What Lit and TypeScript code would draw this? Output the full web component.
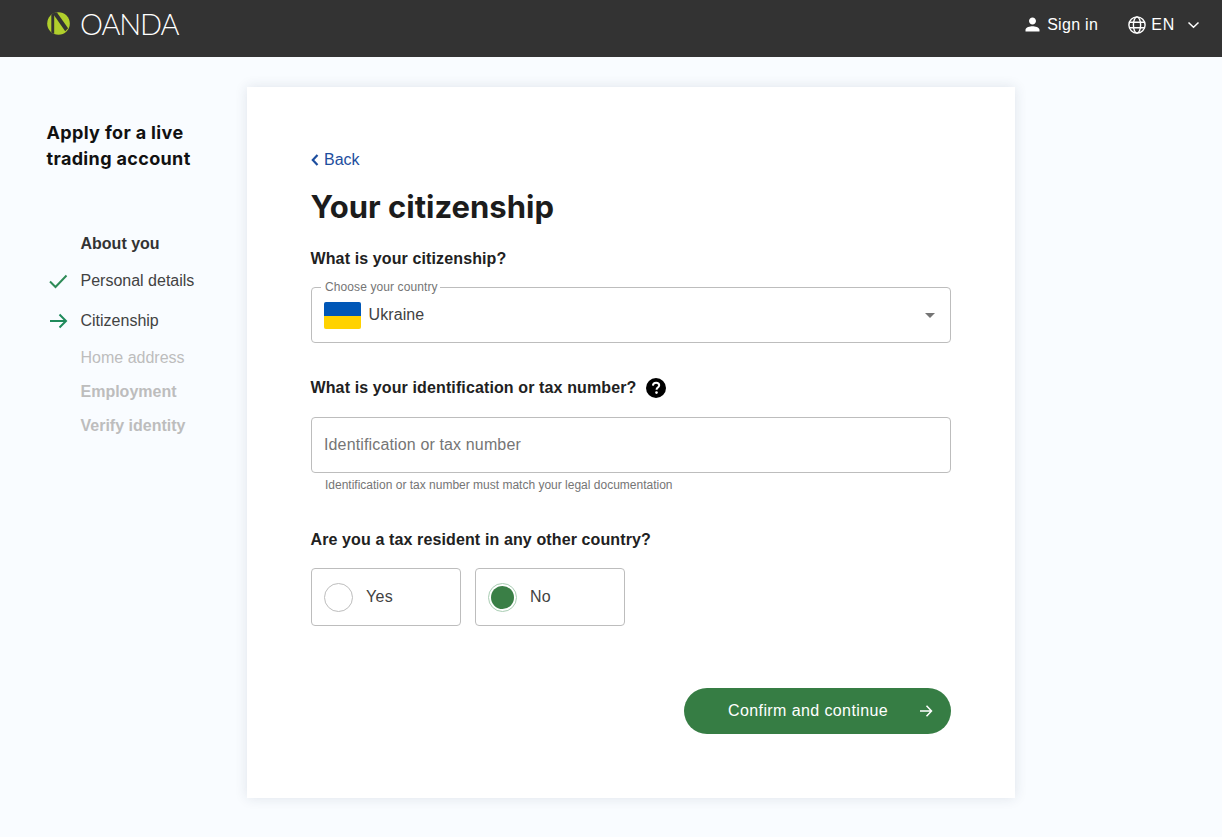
import { LitElement, html, css } from "lit";
import { customElement } from "lit/decorators.js";

@customElement("app-root")
export class AppRoot extends LitElement {
  static styles = css`
    :host { display: block; min-height: 837px; background: #f9fcff; font-family: "Liberation Sans", Arial, sans-serif; color: #212121; }
    * { box-sizing: border-box; }
    .top { height: 57px; background: #333333; display: flex; align-items: flex-start; padding: 0 22px 0 47px; color: #fff; }
    .logo { display: flex; align-items: center; height: 47px; gap: 10px; }
    .word { font-family: Lato, sans-serif; font-weight: 300; font-size: 29px; letter-spacing: -1.1px; line-height: 47px; color: #fff; }
    .spacer { flex: 1; }
    .nav { display: flex; align-items: center; height: 49px; font-size: 16px; color: #fff; }
    .nav svg { display: block; }
    .signin { margin-left: 4px; margin-right: 30px; letter-spacing: .3px; }
    .en { margin-left: 5px; margin-right: 12px; letter-spacing: .8px; }
    .main { display: flex; align-items: flex-start; padding: 30px 0 0 46px; }
    .side { width: 201px; flex: none; padding-top: 33px; }
    .title { font-family: Inter, sans-serif; font-weight: 700; font-size: 18px; line-height: 26px; color: #111; margin: 0 0 0 .5px; letter-spacing: .35px; }
    .steps { margin-top: 63px; font-size: 16px; color: #424242; }
    .step { display: flex; align-items: center; padding-left: 34.5px; position: relative; line-height: 18px; }
    .step svg { position: absolute; left: 3px; top: 50%; transform: translateY(-50%); }
    .b { font-weight: 700; color: #333; }
    .step.dim { color: #bdbdbd; }
    .s1 { height: 18px; }
    .s2 { margin-top: 19px; height: 18px; }
    .s3 { margin-top: 22px; height: 18px; }
    .s4 { margin-top: 19px; height: 18px; }
    .s5, .s6 { margin-top: 16px; height: 18px; }
    .card { width: 768px; height: 711px; flex: none; background: #fff; box-shadow: 0 0 12px rgba(30,50,80,.12); padding: 64px 64px 0 64px; }
    .back { display: flex; align-items: center; gap: 5px; color: #1d4e9e; font-size: 16px; line-height: 18px; height: 18px; }
    h1 { font-family: Inter, sans-serif; font-weight: 700; font-size: 31px; line-height: 40px; margin: 18px 0 0 -.5px; color: #1c1c1c; }
    .q { font-size: 16px; font-weight: 700; line-height: 18px; letter-spacing: .12px; color: #212121; display: flex; align-items: center; margin-left: -.5px; }
    .q1 { margin-top: 23px; }
    .field { width: 640px; height: 56px; border: 1px solid #bdbdbd; border-radius: 4px; background: #fff; position: relative; display: flex; align-items: center; padding-left: 12px; }
    .sel { margin-top: 19px; }
    .legend { position: absolute; left: 9px; top: -8px; background: #fff; padding: 0 2px 0 4px; font-size: 12px; line-height: 15px; color: #757575; letter-spacing: .1px; }
    .flag { width: 37px; height: 27px; border-radius: 2px; overflow: hidden; flex: none; display: flex; flex-direction: column; box-shadow: inset 0 0 0 1px rgba(0,0,0,.08); margin-right: 7.5px; margin-top: 1px; }
    .flag i { flex: 1; display: block; }
    .fb { background: #0057b7; }
    .fy { background: #ffd200; }
    .val { font-size: 16px; color: #424242; letter-spacing: .1px; }
    .caret { position: absolute; right: 15px; top: 25px; width: 0; height: 0; border-left: 5px solid transparent; border-right: 5px solid transparent; border-top: 5px solid #757575; }
    .q2 { margin-top: 34px; height: 22px; }
    .help { margin-left: 10px; display: block; }
    .inp { margin-top: 18px; font-size: 16px; color: #757575; letter-spacing: .14px; }
    .hint { margin: 5px 0 0 14px; font-size: 12px; line-height: 15px; color: #757575; }
    .q3 { margin-top: 38px; }
    .radios { display: flex; gap: 14px; margin-top: 19px; }
    .radio { width: 150px; height: 58px; border: 1px solid #bdbdbd; border-radius: 4px; display: flex; align-items: center; padding-left: 12px; font-size: 16px; color: #424242; gap: 13px; letter-spacing: .3px; }
    .dot { width: 29px; height: 29px; border-radius: 50%; border: 1px solid #bdbdbd; flex: none; background: #fff; }
    .dot.on { border-color: #a9cdb3; padding: 2px; }
    .dot.on::before { content: ""; display: block; width: 23px; height: 23px; border-radius: 50%; background: #3a7f46; }
    .foot { width: 640px; display: flex; justify-content: flex-end; margin-top: 62px; }
    .btn { width: 267px; height: 46px; border-radius: 23px; background: #367d44; color: #fff; font-size: 16px; letter-spacing: .4px; display: flex; align-items: center; padding-left: 44px; border: 0; font-family: inherit; }
    .btn svg { margin-left: 31px; display: block; }
  `;

  render() {
    return html`
      <div class="top">
        <div class="logo">
          <svg width="23" height="23" viewBox="0 0 24 24">
            <defs><clipPath id="c"><circle cx="12" cy="12" r="11.8"/></clipPath></defs>
            <g clip-path="url(#c)">
              <rect width="24" height="24" fill="#b0cf2c"/>
              <path d="M4.500 0h3v24h-3z" fill="#333"/>
              <path d="M5 0h5l12 17-3 3z" fill="#333"/>
            </g>
          </svg>
          <span class="word">OANDA</span>
        </div>
        <div class="spacer"></div>
        <div class="nav">
          <svg width="21" height="21" viewBox="0 0 24 24" fill="#fff"><path d="M12 12c2.200 0 4-1.800 4-4s-1.800-4-4-4-4 1.800-4 4 1.800 4 4 4zm0 2c-2.700 0-8 1.300-8 4v2h16v-2c0-2.700-5.300-4-8-4z"/></svg>
          <span class="signin">Sign in</span>
          <svg width="18" height="18" viewBox="0 0 18 18" fill="none" stroke="#fff" stroke-width="1.400"><circle cx="9" cy="9" r="8.100"/><ellipse cx="9" cy="9" rx="3.600" ry="8.100"/><path d="M1.500 6.200h15M1.500 11.800h15"/></svg>
          <span class="en">EN</span>
          <svg width="13" height="8" viewBox="0 0 13 8" fill="none" stroke="#fff" stroke-width="1.500"><path d="M1.500 1.500 6.500 6.300l5-4.800"/></svg>
        </div>
      </div>
      <div class="main">
        <aside class="side">
          <p class="title">Apply for a live<br />trading account</p>
          <div class="steps">
            <div class="step b s1">About you</div>
            <div class="step s2">
              <svg width="20" height="16" viewBox="0 0 20 16" fill="none" stroke="#2e8b57" stroke-width="2"><path d="M1 8.500 6.500 14 17.500 2.500"/></svg>
              Personal details
            </div>
            <div class="step s3">
              <svg width="20" height="16" viewBox="0 0 20 16" fill="none" stroke="#1f8a5b" stroke-width="2"><path d="M1 8h16M10.500 1.500 17 8l-6.500 6.500"/></svg>
              Citizenship
            </div>
            <div class="step dim s4">Home address</div>
            <div class="step dim b s5">Employment</div>
            <div class="step dim b s6">Verify identity</div>
          </div>
        </aside>
        <section class="card">
          <div class="back">
            <svg width="8" height="12" viewBox="0 0 8 12" fill="none" stroke="#1d4e9e" stroke-width="2.200"><path d="M6.500 1 1.800 6l4.700 5"/></svg>
            <span>Back</span>
          </div>
          <h1>Your citizenship</h1>
          <div class="q q1">What is your citizenship?</div>
          <div class="field sel">
            <span class="legend">Choose your country</span>
            <span class="flag"><i class="fb"></i><i class="fy"></i></span>
            <span class="val">Ukraine</span>
            <span class="caret"></span>
          </div>
          <div class="q q2">
            What is your identification or tax number?
            <svg class="help" width="20" height="20" viewBox="0 0 20 20"><circle cx="10" cy="10" r="10" fill="#000"/><path d="M6.900 7.600c.1-1.900 1.400-2.900 3.200-2.900 1.800 0 3.100 1 3.100 2.600 0 1.200-.6 1.800-1.500 2.400-.8.500-1.100.9-1.100 1.700v.4" fill="none" stroke="#fff" stroke-width="2"/><circle cx="10.500" cy="14.600" r="1.300" fill="#fff"/></svg>
          </div>
          <div class="field inp">Identification or tax number</div>
          <div class="hint">Identification or tax number must match your legal documentation</div>
          <div class="q q3">Are you a tax resident in any other country?</div>
          <div class="radios">
            <div class="radio"><span class="dot"></span>Yes</div>
            <div class="radio"><span class="dot on"></span>No</div>
          </div>
          <div class="foot">
            <button class="btn">Confirm and continue
              <svg width="14" height="14" viewBox="0 0 14 14" fill="none" stroke="#fff" stroke-width="1.500"><path d="M1 7h11.500M7.500 1.800 12.500 7l-5 5.200"/></svg>
            </button>
          </div>
        </section>
      </div>
    `;
  }
}
